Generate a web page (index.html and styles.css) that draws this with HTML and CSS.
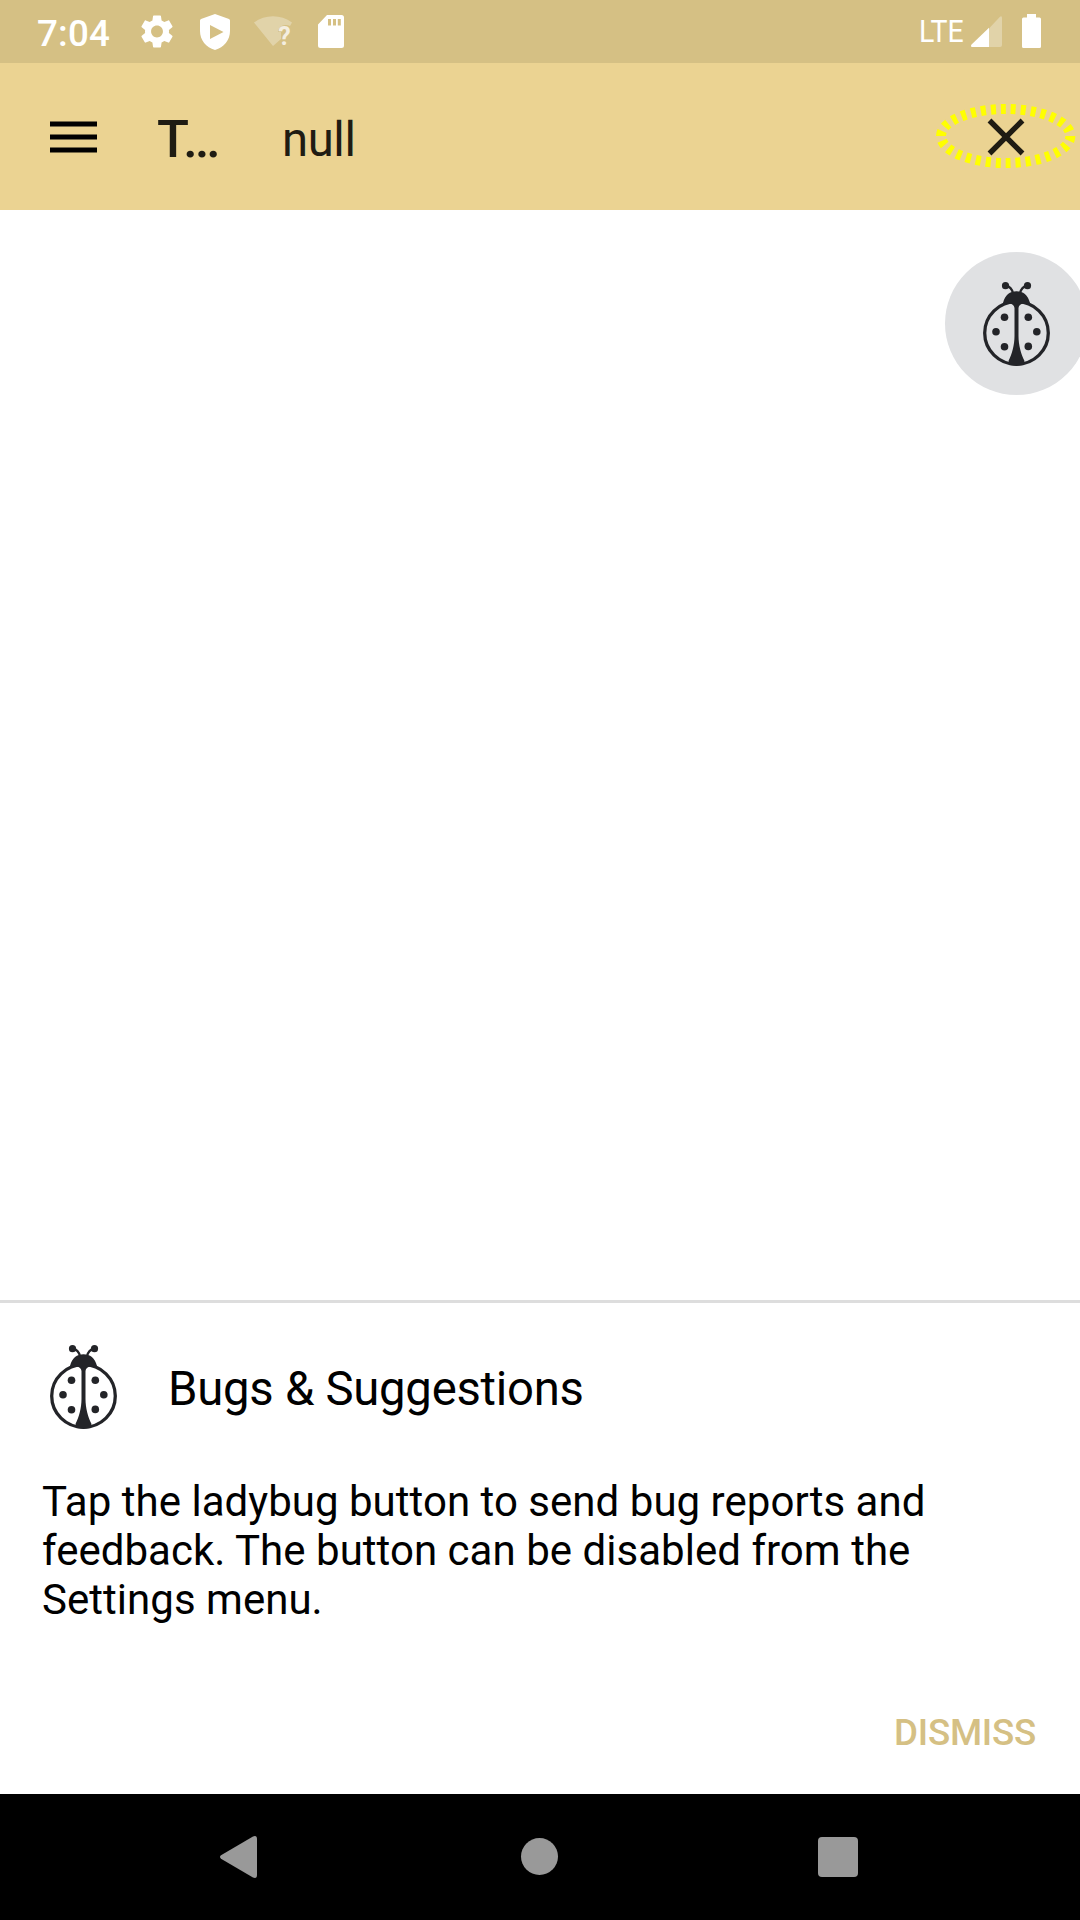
FILE: index.html
```html
<!DOCTYPE html>
<html lang="en">
<head>
<meta charset="utf-8">
<title>Bugs &amp; Suggestions</title>
<link rel="stylesheet" href="styles.css">
</head>
<body>
<svg class="defs" width="0" height="0" aria-hidden="true">
  <symbol id="ladybug" viewBox="0 0 67 84">
    <ellipse cx="33.5" cy="51" rx="31.8" ry="31.3" fill="none" stroke="#232428" stroke-width="3.3"/>
    <path fill="#232428" d="M20 21C22 13 27 9.300 33.500 9.300C40 9.300 45 13 47 21L43 22C38 21 36 23 35.500 26V54C35.500 63 38 72 41.500 79L40 83Q33.500 84.500 27 83L25.500 79C29 72 31.500 63 31.500 54V26C31 23 29 21 24 22Z"/>
    <path fill="none" stroke="#232428" stroke-width="2.200" d="M23 3.600Q28.500 5 30 11M44 3.600Q38.500 5 37 11"/>
    <g fill="#232428">
      <circle cx="22.500" cy="3.700" r="3.600"/><circle cx="44.500" cy="3.700" r="3.600"/>
      <circle cx="21.500" cy="35.200" r="3.800"/><circle cx="45.300" cy="35.200" r="3.800"/>
      <circle cx="13" cy="49.700" r="3.800"/><circle cx="53.800" cy="49.700" r="3.800"/>
      <circle cx="21.500" cy="64.700" r="3.800"/><circle cx="45.300" cy="64.400" r="3.800"/>
    </g>
  </symbol>
</svg>
<div class="screen">
  <header class="status">
    <span class="clock">7:04</span>
    <svg class="gear" viewBox="2 2 20 20"><path fill="#fff" d="M19.430 12.980c.04-.32.070-.64.070-.98s-.03-.66-.07-.98l2.110-1.650c.19-.15.24-.42.12-.64l-2-3.460c-.12-.22-.39-.3-.61-.22l-2.490 1c-.52-.4-1.080-.73-1.690-.98l-.38-2.650C14.460 2.180 14.250 2 14 2h-4c-.25 0-.46.18-.49.42l-.38 2.650c-.61.25-1.170.59-1.690.98l-2.490-1c-.23-.09-.49 0-.61.22l-2 3.460c-.13.22-.07.49.12.64l2.110 1.650c-.04.32-.07.65-.07.98s.03.66.07.98l-2.110 1.650c-.19.15-.24.42-.12.64l2 3.460c.12.22.39.3.61.22l2.490-1c.52.4 1.080.73 1.690.98l.38 2.650c.03.24.24.42.49.42h4c.25 0 .46-.18.49-.42l.38-2.650c.61-.25 1.170-.59 1.690-.98l2.490 1c.23.09.49 0 .61-.22l2-3.460c.12-.22.070-.49-.12-.64l-2.110-1.650zM12 15.700c-2.040 0-3.700-1.660-3.700-3.700s1.660-3.700 3.700-3.700 3.700 1.660 3.700 3.700-1.660 3.700-3.700 3.700z"/></svg>
    <svg class="shield" viewBox="0 0 30 36"><path fill="#fff" fill-rule="evenodd" d="M15 0L29 5Q30 5.500 30 6.500V17C30 26 24 33.500 15 36C6 33.500 0 26 0 17V6.500Q0 5.500 1 5ZM10 11V25L23.500 18Z"/></svg>
    <svg class="wifi" viewBox="0 0 38 30"><path fill="#fff" fill-opacity=".3" d="M0 6.500C11-2 27-2 38 6.500L36 10C30 7 24 11 24 16H27V23L19 30Z"/><text class="wifi-mark" x="24.2" y="28.800">?</text></svg>
    <svg class="sd" viewBox="0 0 26 33"><path fill="#fff" fill-rule="evenodd" d="M9 0H23.500Q26 0 26 2.500V30.500Q26 33 23.500 33H2.500Q0 33 0 30.500V9.500ZM10 4V10.500H13V4ZM15 4V10.500H18V4ZM19.800 4V10.500H22.800V4Z"/></svg>
    <span class="network">LTE</span>
    <svg class="signal" viewBox="0 0 31 31"><path fill="#fff" fill-opacity=".3" d="M18 12.500L29 .8Q31 -.5 31 2V29Q31 31 29 31H18Z"/><path fill="#fff" d="M18 11.800V31H1Q-.5 31 .3 28.800Z"/></svg>
    <svg class="battery" viewBox="0 0 19 34"><path fill="#fff" d="M5 0H14V3.500H17.500Q19 3.500 19 5V32.500Q19 34 17.500 34H1.500Q0 34 0 32.500V5Q0 3.500 1.500 3.500H5Z"/></svg>
  </header>
  <div class="appbar">
    <svg class="menu" viewBox="0 0 47 32"><path d="M0 .4H47V5.600H0ZM0 13.400H47V18.600H0ZM0 26.400H47V31.600H0Z"/></svg>
    <span class="title">T…</span>
    <span class="subtitle">null</span>
    <svg class="close" viewBox="0 0 140 66"><path d="M53.500 16.500L86.500 49.500M86.500 16.500L53.500 49.500" stroke="#1f1c13" stroke-width="5.400"/><ellipse cx="69.700" cy="32" rx="64.700" ry="27" fill="none" stroke="#ff0" stroke-width="10" stroke-dasharray="5 5"/></svg>
  </div>
  <main class="content">
    <div class="fab"><svg class="bug"><use href="#ladybug"/></svg></div>
  </main>
  <section class="sheet">
    <div class="heading"><svg class="bug"><use href="#ladybug"/></svg><h1>Bugs &amp; Suggestions</h1></div>
    <p class="message">Tap the ladybug button to send bug reports and<br>feedback. The button can be disabled from the<br>Settings menu.</p>
    <button class="dismiss">DISMISS</button>
  </section>
  <nav class="nav">
    <svg class="back" viewBox="0 0 37 42"><path fill="#999" d="M1 19.300L33 .5Q37-1 37 3V39Q37 43 33 41.500L1 22.700Q-1 21 1 19.300Z"/></svg>
    <span class="home"></span>
    <span class="recent"></span>
  </nav>
</div>
</body>
</html>
```
FILE: styles.css
```css
* { box-sizing: border-box; margin: 0; padding: 0; }
body { width: 1080px; height: 1920px; overflow: hidden; background: #fff; font-family: Roboto, sans-serif; }
svg { display: block; flex: none; }
.defs { position: absolute; }
.screen { display: flex; flex-direction: column; width: 1080px; height: 1920px; overflow: hidden; }

.status { display: flex; align-items: flex-start; height: 63px; padding-left: 37px; background: #d5c084; color: #fff; }
.clock { width: 104px; padding-top: 12px; font-size: 36.75px; font-weight: 500; line-height: 43px; letter-spacing: .2px; }
.gear { width: 32px; height: 33px; margin-top: 15px; }
.shield { width: 30px; height: 36px; margin: 14px 0 0 27px; }
.wifi { width: 38px; height: 30px; margin: 16px 0 0 24px; overflow: visible; }
.wifi-mark { font-size: 25px; font-weight: 700; fill: #f4eee0; }
.sd { width: 26px; height: 33px; margin: 15px 0 0 26px; }
.network { width: 52px; margin-left: 575px; padding-top: 12px; font-size: 32px; line-height: 38px; transform: scaleX(.89); transform-origin: left; }
.signal { width: 31px; height: 31px; margin-top: 16px; }
.battery { width: 19px; height: 34px; margin: 14px 0 0 20px; }

.appbar { display: flex; align-items: flex-start; height: 147px; padding-left: 50px; background: #ebd392; color: #1f1c13; }
.menu { width: 47px; height: 32px; margin-top: 58px; }
.title { width: 125px; margin-left: 60px; padding-top: 45px; font-size: 52.5px; font-weight: 500; line-height: 62px; }
.subtitle { width: 101px; padding-top: 49px; font-size: 47.25px; line-height: 56px; letter-spacing: -.4px; }
.close { width: 140px; height: 66px; margin: 41px 0 0 553px; }

.content { display: flex; justify-content: flex-end; height: 1090px; padding-top: 42px; }
.fab { width: 143px; height: 143px; margin-right: -8px; padding: 30px 0 0 38px; border-radius: 50%; background: #e0e1e3; }
.bug { width: 67px; height: 84px; }

.sheet { display: flex; flex-direction: column; height: 494px; padding: 42px 42px 0; border-top: 3px solid #ddd; color: #000; }
.heading { display: flex; align-items: flex-start; height: 132px; padding-left: 8px; }
h1 { margin: 16px 0 0 51px; font-size: 47.25px; font-weight: 400; line-height: 56px; letter-spacing: -.25px; white-space: nowrap; }
.message { height: 210px; font-size: 42px; line-height: 49px; letter-spacing: .03px; white-space: nowrap; }
.dismiss { align-self: flex-end; margin: 24px 2px 0 0; border: 0; background: none; color: #d5c084; font: 500 36.75px/43px Roboto, sans-serif; letter-spacing: -.25px; }

.nav { display: flex; align-items: flex-start; height: 126px; padding-left: 220px; background: #000; }
.back { width: 37px; height: 42px; margin-top: 42px; }
.home { width: 37px; height: 37px; margin: 44px 0 0 264px; border-radius: 50%; background: #999; }
.recent { width: 40px; height: 40px; margin: 43px 0 0 260px; border-radius: 4px; background: #999; }
```
